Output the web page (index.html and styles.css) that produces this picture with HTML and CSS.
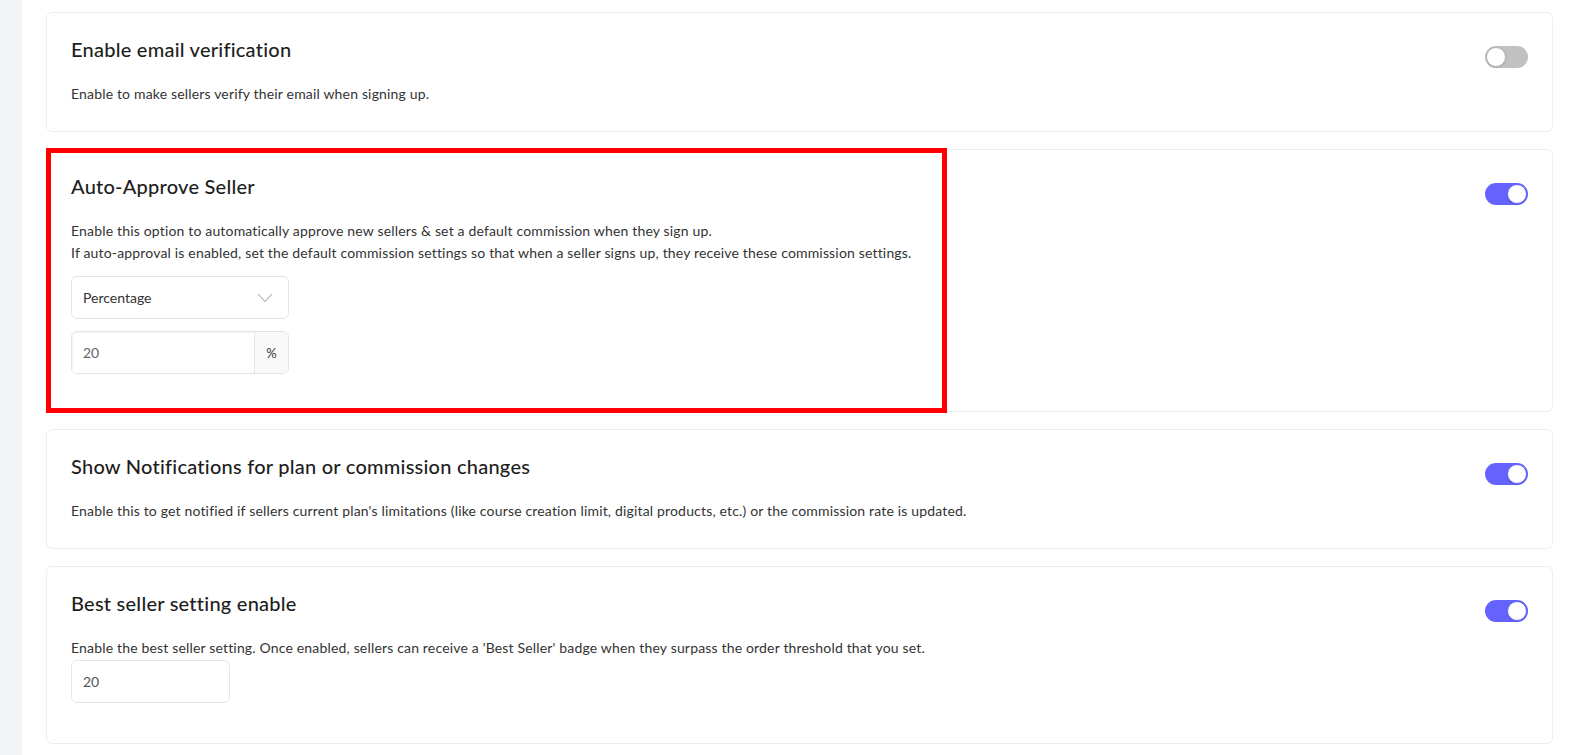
FILE: index.html
```html
<!DOCTYPE html>
<html lang="en">
<head>
    <meta charset="UTF-8">
    <meta name="viewport" content="width=device-width, initial-scale=1.0">
    <title>Seller settings</title>
    <link rel="stylesheet" href="styles.css">
</head>
<body>

<div class="layout">
    <aside class="rail"></aside>

    <main class="settings">

        <section class="setting-card">
            <div class="setting-body">
                <h3 class="setting-title">Enable email verification</h3>
                <p class="setting-desc">Enable to make sellers verify their email when signing up.</p>
            </div>
            <span class="switch"><span class="knob"></span></span>
        </section>

        <section class="setting-card highlighted">
            <div class="setting-body">
                <h3 class="setting-title">Auto-Approve Seller</h3>
                <p class="setting-desc">Enable this option to automatically approve new sellers &amp; set a default commission when they sign up.<br>If auto-approval is enabled, set the default commission settings so that when a seller signs up, they receive these commission settings.</p>
                <div class="field-stack">
                    <div class="select-box">
                        <span>Percentage</span>
                        <svg width="16" height="10" viewBox="0 0 16 10"><path d="M1 1 L8 8.5 L15 1" fill="none" stroke="#c4c4c4" stroke-width="1.3"/></svg>
                    </div>
                    <div class="input-group">
                        <input type="text" value="20">
                        <span class="addon">%</span>
                    </div>
                </div>
            </div>
            <span class="switch on"><span class="knob"></span></span>
            <div class="annotation"></div>
        </section>

        <section class="setting-card">
            <div class="setting-body">
                <h3 class="setting-title">Show Notifications for plan or commission changes</h3>
                <p class="setting-desc">Enable this to get notified if sellers current plan's limitations (like course creation limit, digital products, etc.) or the commission rate is updated.</p>
            </div>
            <span class="switch on"><span class="knob"></span></span>
        </section>

        <section class="setting-card">
            <div class="setting-body">
                <h3 class="setting-title">Best seller setting enable</h3>
                <p class="setting-desc">Enable the best seller setting. Once enabled, sellers can receive a 'Best Seller' badge when they surpass the order threshold that you set.</p>
                <input class="small-input" type="text" value="20">
            </div>
            <span class="switch on"><span class="knob"></span></span>
        </section>

    </main>
</div>

</body>
</html>
```
FILE: styles.css
```css
body {
    margin: 0;
    font-family: "Lato", "Liberation Sans", sans-serif;
    color: #222;
    background: #fff;
}
.layout {
    display: flex;
    min-height: 755px;
}
.rail {
    width: 22px;
    flex-shrink: 0;
    background: #f3f4f8;
}
.settings {
    flex: 1;
    padding: 12px 24px 24px;
    display: flex;
    flex-direction: column;
    gap: 17px;
}
.setting-card {
    position: relative;
    display: flex;
    justify-content: space-between;
    align-items: flex-start;
    padding: 22px 24px 26px;
    border: 1px solid #eceef2;
    border-radius: 6px;
    background: #fff;
}
.setting-title {
    margin: 0;
    font-size: 20px;
    line-height: 28px;
    font-weight: 500;
    letter-spacing: 0.24px;
    color: #1e1e1e;
}
.setting-desc {
    margin: 20px 0 0;
    font-size: 14px;
    line-height: 22px;
    letter-spacing: 0.17px;
    color: #333;
}
.field-stack {
    display: flex;
    flex-direction: column;
    gap: 12px;
    width: 218px;
    margin: 12px 0 11px;
}
.select-box {
    box-sizing: border-box;
    height: 43px;
    display: flex;
    align-items: center;
    justify-content: space-between;
    padding: 0 15px 0 11px;
    border: 1px solid #e4e4e4;
    border-radius: 6px;
    font-size: 14px;
    color: #333;
}
.input-group {
    box-sizing: border-box;
    height: 43px;
    display: flex;
    border: 1px solid #e4e4e4;
    border-radius: 6px;
    overflow: hidden;
}
.input-group input {
    flex: 1;
    min-width: 0;
    border: none;
    padding: 0 11px;
    font-family: inherit;
    font-size: 14px;
    color: #666;
    box-shadow: inset 1px 1px 2px rgba(0, 0, 0, 0.06);
    outline: none;
}
.addon {
    width: 33px;
    display: flex;
    align-items: center;
    justify-content: center;
    background: #f9f9f9;
    border-left: 1px solid #e6e6e6;
    font-size: 13px;
    color: #333;
}
.small-input {
    display: block;
    box-sizing: border-box;
    width: 159px;
    height: 43px;
    margin: 1px 0 14px;
    padding: 0 11px;
    border: 1px solid #e6e6e6;
    border-radius: 6px;
    font-family: inherit;
    font-size: 14px;
    color: #555;
    outline: none;
}
.switch {
    position: relative;
    flex-shrink: 0;
    width: 43px;
    height: 22px;
    margin-top: 11px;
    border-radius: 11px;
    background: #c1c1c1;
}
.switch .knob {
    position: absolute;
    top: 1px;
    left: 1px;
    box-sizing: border-box;
    width: 20px;
    height: 20px;
    border-radius: 50%;
    background: #fff;
    border: 1.5px solid #b3b3b3;
    box-shadow: 0 1px 2px rgba(0, 0, 0, 0.12);
}
.switch.on {
    background: #6563fe;
}
.switch.on .knob {
    left: auto;
    right: 1px;
    border-color: #6563fe;
}
.annotation {
    position: absolute;
    top: -2px;
    left: -1px;
    bottom: -2px;
    width: 901px;
    box-sizing: border-box;
    border: 5px solid #ff0000;
    pointer-events: none;
}
```
